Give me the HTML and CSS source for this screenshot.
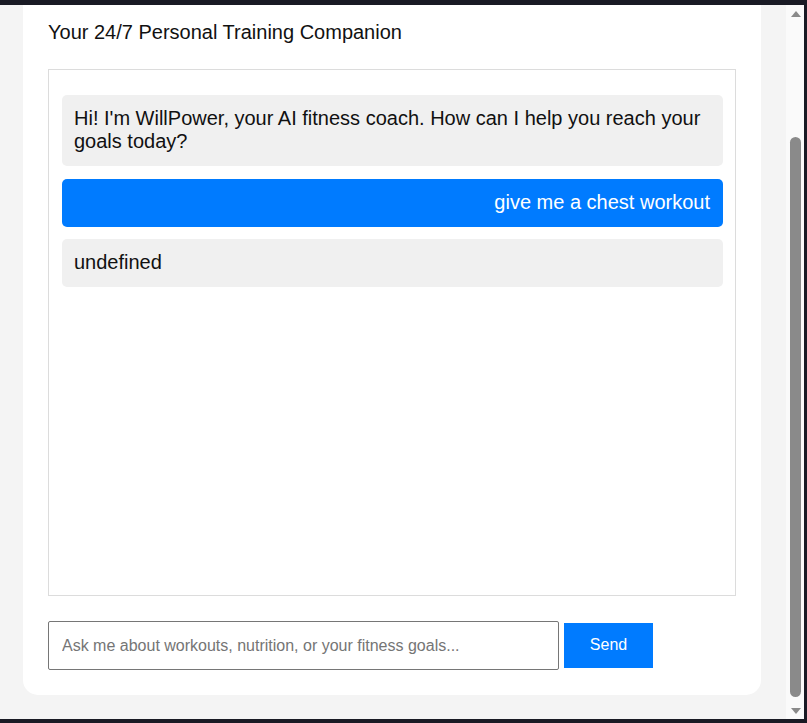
FILE: index.html
```html
<!DOCTYPE html>
<html lang="en">
<head>
<meta charset="utf-8">
<title>WillPower</title>
<link rel="stylesheet" href="styles.css">
</head>
<body>
<div class="frame">
  <div class="viewport">
    <div class="card">
      <p class="tagline">Your 24/7 Personal Training Companion</p>
      <div class="chat">
        <div class="msg bot">Hi! I'm WillPower, your AI fitness coach. How can I help you reach your goals today?</div>
        <div class="msg user">give me a chest workout</div>
        <div class="msg bot">undefined</div>
      </div>
      <div class="composer">
        <input class="input" type="text" placeholder="Ask me about workouts, nutrition, or your fitness goals...">
        <button class="send">Send</button>
      </div>
    </div>
  </div>
  <div class="scrollbar">
    <div class="arrow"><span class="tri up"></span></div>
    <div class="track"><div class="thumb"></div></div>
    <div class="arrow"><span class="tri down"></span></div>
  </div>
</div>
</body>
</html>
```
FILE: styles.css
```css
* { box-sizing: border-box; }
html, body { margin: 0; height: 723px; overflow: hidden; }
body {
  background: #191a24;
  font-family: "Liberation Sans", Arial, sans-serif;
}
.frame {
  display: flex;
  height: 723px;
  padding: 5px 3px 4px 0;
}
.viewport {
  flex: 1;
  background: #f4f4f4;
  display: flex;
  flex-direction: column;
  padding: 0 25px 24px 23px;
  overflow: hidden;
}
.card {
  flex: 1;
  background: #fff;
  border-radius: 0 0 15px 15px;
  padding: 16px 25px 25px;
  display: flex;
  flex-direction: column;
}
.tagline {
  margin: 0;
  font-size: 20px;
  line-height: 23px;
  color: #111;
}
.chat {
  margin-top: 25px;
  height: 527px;
  border: 1px solid #dcdcdc;
  padding: 25px 12px 0 13px;
  display: flex;
  flex-direction: column;
  gap: 12.5px;
}
.msg {
  font-size: 20px;
  line-height: 23px;
  padding: 12px 12px 13px;
  border-radius: 5px;
}
.bot { background: #f0f0f0; color: #111; }
.user { background: #007bff; color: #fff; text-align: right; padding-right: 13px; }
.composer {
  margin-top: 25px;
  display: flex;
  align-items: center;
  gap: 5px;
}
.input {
  width: 511px;
  height: 49px;
  border: 1px solid #767676;
  border-radius: 2px;
  padding: 0 13px;
  font-family: "Liberation Sans", Arial, sans-serif;
  font-size: 16px;
  color: #111;
}
.input::placeholder { color: #757575; }
.send {
  width: 89px;
  height: 45px;
  border: none;
  background: #007bff;
  color: #fff;
  font-family: "Liberation Sans", Arial, sans-serif;
  font-size: 16px;
  padding: 0 0 2px;
}
.scrollbar {
  width: 18px;
  background: #fafafa;
  display: flex;
  flex-direction: column;
}
.arrow {
  height: 17px;
  display: flex;
  align-items: center;
  justify-content: center;
  padding-left: 1px;
}
.tri { width: 0; height: 0; border-left: 5px solid transparent; border-right: 5px solid transparent; }
.tri.up { border-bottom: 6px solid #8a8a8a; }
.tri.down { border-top: 6px solid #8a8a8a; }
.track {
  flex: 1;
  padding: 115px 3px 5px 4px;
  display: flex;
}
.thumb {
  flex: 1;
  background: #8a8a8a;
  border-radius: 6px;
}
```
